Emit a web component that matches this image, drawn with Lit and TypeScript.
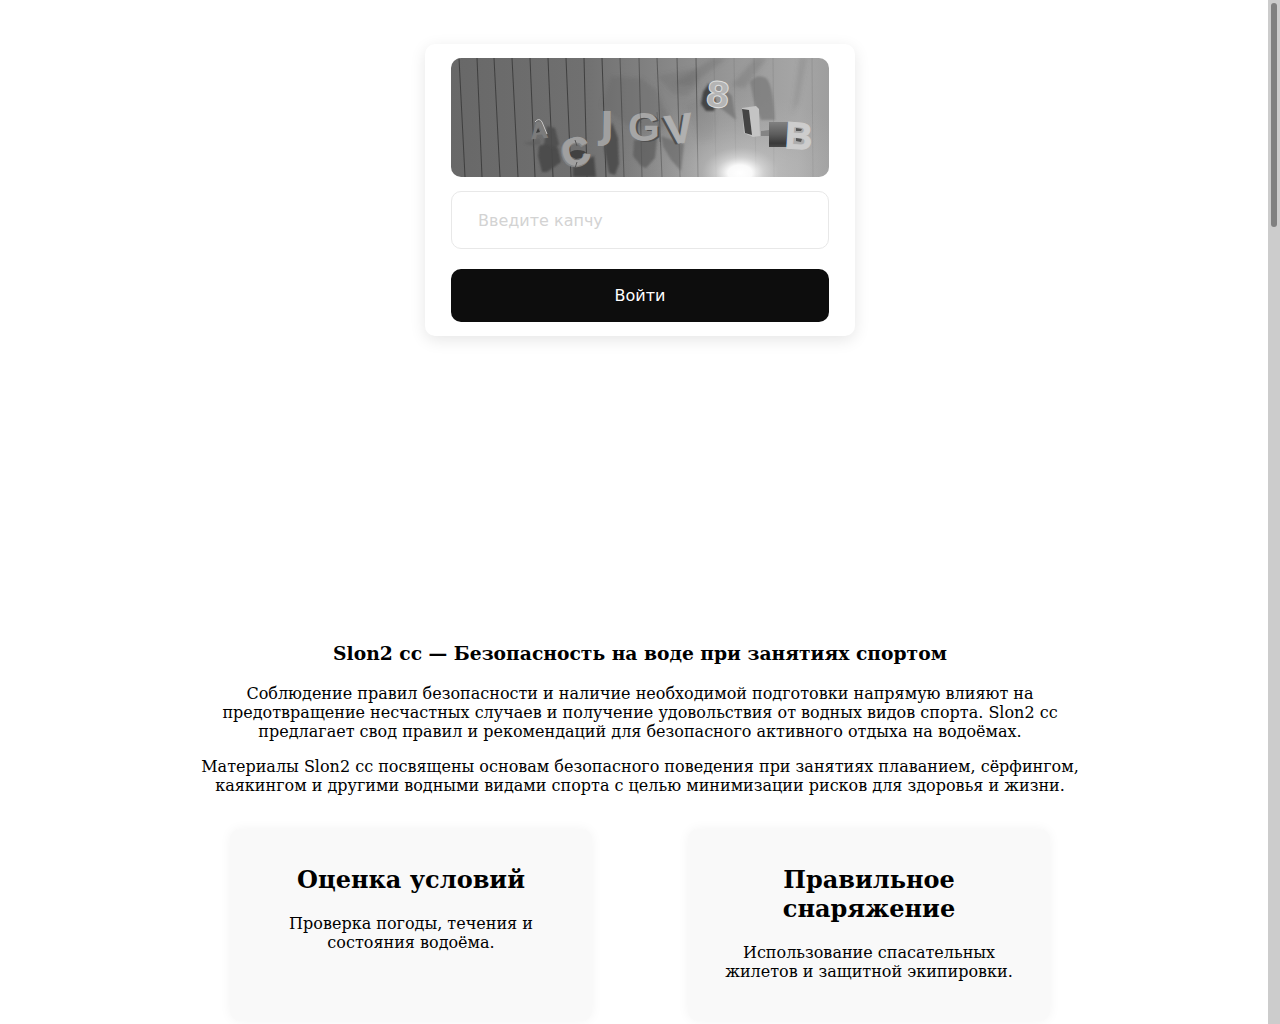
import { LitElement, html, svg, css } from "lit";
import { customElement } from "lit/decorators.js";

const BOARDS: [number, number][] = [
  [8, 14], [26, 31], [43, 49], [61, 67], [79, 84], [97, 102], [115, 120],
  [133, 136], [151, 155], [169, 173], [188, 191], [206, 211], [226, 229],
  [245, 247], [263, 265], [283, 285], [303, 305], [322, 323], [361, 362],
];

@customElement("captcha-picture")
class CaptchaPicture extends LitElement {
  static styles = css`
    :host { display: block; }
    .picture { display: block; width: 100%; height: auto; border-radius: 10px; }
    .glyph { font-family: "DejaVu Sans", sans-serif; font-weight: 700; text-anchor: middle; }
    .round { font-family: "Liberation Sans", sans-serif; }
  `;

  render() {
    return html`
      <svg class="picture" viewBox="0 0 378 119" role="img" aria-label="Капча">
        <defs>
          <linearGradient id="wall" x1="0" y1="0" x2="1" y2="0">
            <stop offset="0" stop-color="#686868" />
            <stop offset="0.35" stop-color="#707070" />
            <stop offset="0.55" stop-color="#848484" />
            <stop offset="0.75" stop-color="#989898" />
            <stop offset="0.92" stop-color="#a6a6a6" />
            <stop offset="1" stop-color="#9e9e9e" />
          </linearGradient>
          <radialGradient id="lamp" gradientUnits="userSpaceOnUse" cx="0" cy="0" r="1" gradientTransform="translate(289 115) scale(120 80)">
            <stop offset="0" stop-color="#fff" />
            <stop offset="0.1" stop-color="#fff" stop-opacity="0.95" />
            <stop offset="0.2" stop-color="#f0f0f0" stop-opacity="0.6" />
            <stop offset="0.32" stop-color="#d8d8d8" stop-opacity="0.4" />
            <stop offset="0.6" stop-color="#ccc" stop-opacity="0.2" />
            <stop offset="1" stop-color="#bbb" stop-opacity="0" />
          </radialGradient>
          <linearGradient id="side" x1="0" y1="0" x2="0" y2="1">
            <stop offset="0" stop-color="#808080" />
            <stop offset="0.5" stop-color="#5c5c5c" />
            <stop offset="0.85" stop-color="#3a3a3a" />
            <stop offset="1" stop-color="#484848" />
          </linearGradient>
          <filter id="soft" x="-20%" y="-20%" width="140%" height="140%"><feGaussianBlur stdDeviation="2" /></filter>
          <filter id="edge" x="-20%" y="-20%" width="140%" height="140%"><feGaussianBlur stdDeviation="0.8" /></filter>
        </defs>
        <rect width="378" height="119" fill="url(#wall)" />
        <g filter="url(#soft)" fill="#5c5c5c">
          <path d="M160 18L190 20L206 32L212 48L218 58L210 72L180 70L150 48Z" opacity="0.28" />
          <path d="M206 18L245 10L248 28L236 38L222 36Z" opacity="0.2" />
          <path d="M222 26L262 0H276L240 28Z" opacity="0.25" />
          <path d="M280 28L304 0H316L294 30Z" opacity="0.25" />
          <path d="M348 0H356L348 44L341 56Z" opacity="0.18" />
          <path d="M234 48L250 40L264 58L262 82L248 84Z" opacity="0.12" />
        </g>
        ${BOARDS.map(([top, bottom]) => svg`<path d=${`M${top} 0L${bottom} 119`} stroke=${top > 245 ? "#606060" : "#383838"} stroke-width="1" opacity=${top > 245 ? 0.2 : top > 160 ? 0.55 : 0.85} />`)}
        <rect width="378" height="119" fill="url(#lamp)" />
        <g filter="url(#edge)">
          <path d="M72 85L82 83L88 80L90 86L82 88Z" fill="#5a5a5a" opacity="0.5" />
          <path d="M88 88L94 86L107 90L110 104L102 110L96 114L91 114L87 98Z" fill="#494949" opacity="0.9" />
          <path d="M96 68L104 70L108 86L104 92L93 86Z" fill="#4c4c4c" opacity="0.9" />
          <path d="M122 108L143 98L145 119H122Z" fill="#4a4a4a" />
          <path d="M161 64L167 80L168 106L164 117L158 115L153 90Z" fill="#505050" />
          <path d="M183 82L206 80L204 100L195 110L190 108L182 98Z" fill="#585858" opacity="0.7" />
          <path d="M210 78L233 86L230 113L220 102L212 88Z" fill="#646464" opacity="0.6" />
          <path d="M275 32L281 38L285 62L267 48Z" fill="#707070" opacity="0.7" />
          <path d="M299 24Q306 15 315 20Q322 26 324 62L310 62L304 48Z" fill="#747474" opacity="0.65" />
          <path d="M258 25L252 34L250 46L255 53L263 53L265 44L260 30Z" fill="#444" />
        </g>
        <g class="glyph">
          <text class="round" x="88" y="80" font-size="23" fill="#7c7c7c" stroke="#7c7c7c" stroke-width="1" transform="rotate(-5 88 72)">A</text>
          <path d="M84 64Q88 59 91 64L96 76" fill="none" stroke="#c8c8c8" stroke-width="1" />
          <path d="M87 70L85 75L89 74Z" fill="#3c3c3c" />
          <path d="M117 97Q121 90 133 93L139 98L125 101Z" fill="#414141" />
          <text class="round" x="124" y="108" font-size="39" fill="#858585" transform="rotate(-13 124 95)" stroke="#858585" stroke-width="2">C</text>
          <text class="round" x="125" y="107" font-size="39" fill="#a0a0a0" transform="rotate(-13 124 95)" stroke="#a0a0a0" stroke-width="1">C</text>
          <path d="M124 82L126 88M126 104L124 110" stroke="#555" />
          <text x="156" y="80" font-size="38" fill="#a0a0a0">J</text>
          <text class="round" x="195" y="84" font-size="41" fill="#505050">G</text>
          <text class="round" x="193" y="83" font-size="41" fill="#a6a6a6">G</text>
          <path d="M189 54L190 65M206 54L209 84" stroke="#555" opacity="0.5" />
          <text class="round" x="225" y="86" font-size="41" fill="#505050" transform="rotate(-8 226 70)">V</text>
          <text class="round" x="228" y="85" font-size="41" fill="#b0b0b0" stroke="#b0b0b0" stroke-width="1" transform="rotate(-8 228 70)">V</text>
          <text x="267" y="49" font-size="35" fill="#b4b4b4" stroke="#dedede" stroke-width="1" transform="rotate(6 267 36)">8</text>
          <path d="M291 50L305 48L308 51L309 78L302 79L293 75Z" fill="#c4c4c4" />
          <path d="M291 51L298 52L301 77L294 75Z" fill="#444" />
          <path d="M310 73L318 72V78H310Z" fill="#848484" />
          <path d="M318 64H339V89H318Z" fill="url(#side)" />
          <text class="round" x="348" y="91" font-size="38" fill="#cdcdcd" stroke="#cdcdcd" stroke-width="1" transform="rotate(4 348 77)">B</text>
          <path d="M345 70L351 71L350 73L345 73ZM345 80L351 81L350 84L345 83Z" fill="#555" />
        </g>
      </svg>
    `;
  }
}

const TOPICS = [
  { title: "Оценка условий", text: "Проверка погоды, течения и состояния водоёма." },
  { title: "Правильное снаряжение", text: "Использование спасательных жилетов и защитной экипировки." },
];

@customElement("app-root")
class AppRoot extends LitElement {
  static styles = css`
    * { box-sizing: border-box; }
    :host {
      display: block;
      position: relative;
      height: 100vh;
      overflow: hidden;
      background: #fff;
      color: #000;
      font: 16px/19px "DejaVu Serif", serif;
    }
    .page { display: flex; flex-direction: column; align-items: center; padding: 44px 20px 0; }
    .login {
      display: flex;
      flex-direction: column;
      width: 100%;
      max-width: 430px;
      padding: 14px 26px;
      border-radius: 10px;
      background: #fff;
      box-shadow: 0 4px 16px rgba(0, 0, 0, 0.1);
    }
    .field, .submit { font: 16px/19px "DejaVu Sans", sans-serif; border-radius: 10px; width: 100%; }
    .field { height: 58px; margin-top: 14px; padding: 0 26px; border: 1px solid #e8e8e8; background: #fff; color: #0d0d0d; outline: none; }
    .field::placeholder { color: #d3d3d3; opacity: 1; }
    .submit { margin-top: 20px; padding: 17px 26px; border: 0; background: #0d0d0d; color: #fff; cursor: pointer; }
    .article { width: 100%; max-width: 900px; margin-top: 306px; text-align: center; }
    .headline { margin: 0 0 19px; line-height: 23px; }
    .text { margin: 0 0 16px; }
    .topics { display: grid; grid-template-columns: 1fr 1fr; gap: 96px; margin-top: 34px; padding: 0 40px; }
    .topic { padding: 36px 30px 40px; border-radius: 10px; background: #f9f9f9; box-shadow: 0 0 12px rgba(0, 0, 0, 0.05); }
    .title { margin: 0 0 20px; font-size: 24px; line-height: 29px; }
    .note { margin: 0; }
    .track { position: absolute; top: 0; right: 0; bottom: 0; width: 12px; padding: 3px; background: #ccc; }
    .thumb { height: 22%; border-radius: 3px; background: #808080; }
  `;

  render() {
    return html`
      <main class="page">
        <form class="login" @submit=${(e: Event) => e.preventDefault()}>
          <captcha-picture></captcha-picture>
          <input class="field" type="text" name="captcha" placeholder="Введите капчу" aria-label="Введите капчу" autocomplete="off" />
          <button class="submit" type="submit">Войти</button>
        </form>
        <article class="article">
          <h3 class="headline">Slon2 cc — Безопасность на воде при занятиях спортом</h3>
          <p class="text">Соблюдение правил безопасности и наличие необходимой подготовки напрямую влияют на предотвращение несчастных случаев и получение удовольствия от водных видов спорта. Slon2 cc предлагает свод правил и рекомендаций для безопасного активного отдыха на водоёмах.</p>
          <p class="text">Материалы Slon2 cc посвящены основам безопасного поведения при занятиях плаванием, сёрфингом, каякингом и другими водными видами спорта с целью минимизации рисков для здоровья и жизни.</p>
          <div class="topics">
            ${TOPICS.map((t) => html`<section class="topic"><h2 class="title">${t.title}</h2><p class="note">${t.text}</p></section>`)}
          </div>
        </article>
      </main>
      <div class="track" aria-hidden="true"><div class="thumb"></div></div>
    `;
  }
}
